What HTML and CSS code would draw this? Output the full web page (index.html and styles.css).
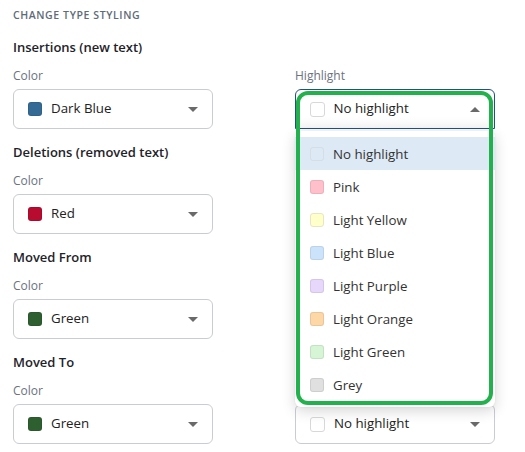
FILE: index.html
```html
<!DOCTYPE html>
<html>
<head>
<meta charset="utf-8">
<link rel="stylesheet" href="styles.css">
</head>
<body>
<div class="page">
  <div class="title">CHANGE TYPE STYLING</div>

  <section class="group">
    <h3 class="group-title">Insertions (new text)</h3>
    <div class="fields">
      <div class="field">
        <div class="label">Color</div>
        <div class="select"><span class="sw sw-blue"></span><span class="val">Dark Blue</span><span class="caret"></span></div>
      </div>
      <div class="field">
        <div class="label">Highlight</div>
        <div class="select-wrap">
          <div class="select open"><span class="sw sw-none"></span><span class="val">No highlight</span><span class="caret up"></span></div>
          <ul class="menu">
            <li class="opt active"><span class="sw sw-none faint"></span>No highlight</li>
            <li class="opt"><span class="sw sw-pink"></span>Pink</li>
            <li class="opt"><span class="sw sw-yellow"></span>Light Yellow</li>
            <li class="opt"><span class="sw sw-lblue"></span>Light Blue</li>
            <li class="opt"><span class="sw sw-purple"></span>Light Purple</li>
            <li class="opt"><span class="sw sw-orange"></span>Light Orange</li>
            <li class="opt"><span class="sw sw-green"></span>Light Green</li>
            <li class="opt"><span class="sw sw-grey"></span>Grey</li>
          </ul>
          <div class="annot"></div>
        </div>
      </div>
    </div>
  </section>

  <section class="group">
    <h3 class="group-title">Deletions (removed text)</h3>
    <div class="fields">
      <div class="field">
        <div class="label">Color</div>
        <div class="select"><span class="sw sw-red"></span><span class="val">Red</span><span class="caret"></span></div>
      </div>
      <div class="field covered">
        <div class="label">Highlight</div>
        <div class="select"><span class="sw sw-none"></span><span class="val">No highlight</span><span class="caret"></span></div>
      </div>
    </div>
  </section>

  <section class="group">
    <h3 class="group-title">Moved From</h3>
    <div class="fields">
      <div class="field">
        <div class="label">Color</div>
        <div class="select"><span class="sw sw-dgreen"></span><span class="val">Green</span><span class="caret"></span></div>
      </div>
      <div class="field covered">
        <div class="label">Highlight</div>
        <div class="select"><span class="sw sw-none"></span><span class="val">No highlight</span><span class="caret"></span></div>
      </div>
    </div>
  </section>

  <section class="group">
    <h3 class="group-title">Moved To</h3>
    <div class="fields">
      <div class="field">
        <div class="label">Color</div>
        <div class="select"><span class="sw sw-dgreen"></span><span class="val">Green</span><span class="caret"></span></div>
      </div>
      <div class="field">
        <div class="label hidden">Highlight</div>
        <div class="select"><span class="sw sw-none"></span><span class="val">No highlight</span><span class="caret"></span></div>
      </div>
    </div>
  </section>
</div>
</body>
</html>
```

FILE: styles.css
```css
* { box-sizing: border-box; }
html, body { margin: 0; padding: 0; background: #fff; }
body {
  font-family: "Open Sans", "Noto Sans", sans-serif;
  color: #222;
  overflow: hidden;
}
.page { padding: 8px 13px 0; }
.title {
  font-size: 10.5px;
  line-height: 14px;
  height: 14px;
  font-weight: 600;
  letter-spacing: 0.6px;
  color: #5e6b78;
}
.group { padding-top: 15px; }
.group + .group { padding-top: 13px; }
.group-title {
  margin: 0;
  font-size: 13px;
  line-height: 20px;
  font-weight: 600;
  color: #1e2329;
}
.fields {
  display: grid;
  grid-template-columns: 200px 200px;
  column-gap: 82px;
  margin-top: 11px;
}
.covered, .hidden { visibility: hidden; }
.label {
  font-size: 12px;
  line-height: 16px;
  color: #6b7280;
  margin-bottom: 5px;
}
.select-wrap { position: relative; }
.select {
  height: 40px;
  border: 1px solid #c9ccd1;
  border-radius: 6px;
  display: flex;
  align-items: center;
  padding: 0 14px 2px 14px;
  background: #fff;
  font-size: 13.3px;
}
.select .sw { margin-top: 2px; }
.select .caret { margin-top: 2px; }
.select.open {
  border: 1.5px solid #1f4f8f;
  border-radius: 6px 6px 0 0;
  padding-left: 13.5px;
  background: linear-gradient(#fff 70%, #f6f6f6);
}
.val { flex: 1; margin-left: 9px; color: #222; }
.sw {
  width: 14px;
  height: 14px;
  border-radius: 3px;
  flex: none;
  border: 1px solid rgba(0,0,0,0.08);
}
.sw-blue { background: #356a94; }
.sw-red { background: #b80b30; }
.sw-dgreen { background: #2e5f30; }
.sw-none { background: #fff; border-color: #d8d8d8; width: 15px; height: 15px; }
.sw-none.faint { border-color: #d5dde6; background: #dde9f4; }
.sw-pink { background: #ffc0cb; }
.sw-yellow { background: #ffffcc; border-color: #e6e6c0; }
.sw-lblue { background: #cce4fb; }
.sw-purple { background: #e6d7fb; }
.sw-orange { background: #fdd7a6; }
.sw-green { background: #d5f5d5; }
.sw-grey { background: #e0e0e0; }
.caret {
  width: 0; height: 0;
  border-left: 5px solid transparent;
  border-right: 5px solid transparent;
  border-top: 5px solid #6a6a6a;
}
.caret.up { border-top: 0; border-bottom: 5px solid #6a6a6a; }
.menu {
  position: absolute;
  left: 0;
  top: calc(100% + 2px);
  width: 200px;
  margin: 0;
  padding: 6px 0;
  list-style: none;
  background: #fff;
  border-radius: 6px;
  box-shadow: 0 4px 14px rgba(0,0,0,0.16), 0 0 2px rgba(0,0,0,0.08);
  z-index: 5;
}
.opt {
  height: 33px;
  display: flex;
  align-items: center;
  padding-left: 15px;
  font-size: 13.3px;
  color: #333;
  gap: 9px;
}
.opt .sw { width: 14px; height: 14px; }
.opt.active { background: #dde9f4; }
.annot {
  position: absolute;
  left: 1px;
  top: 2px;
  width: 197px;
  height: 314px;
  border: 4px solid #22b14c;
  border-radius: 12px;
  z-index: 6;
  pointer-events: none;
}
```
